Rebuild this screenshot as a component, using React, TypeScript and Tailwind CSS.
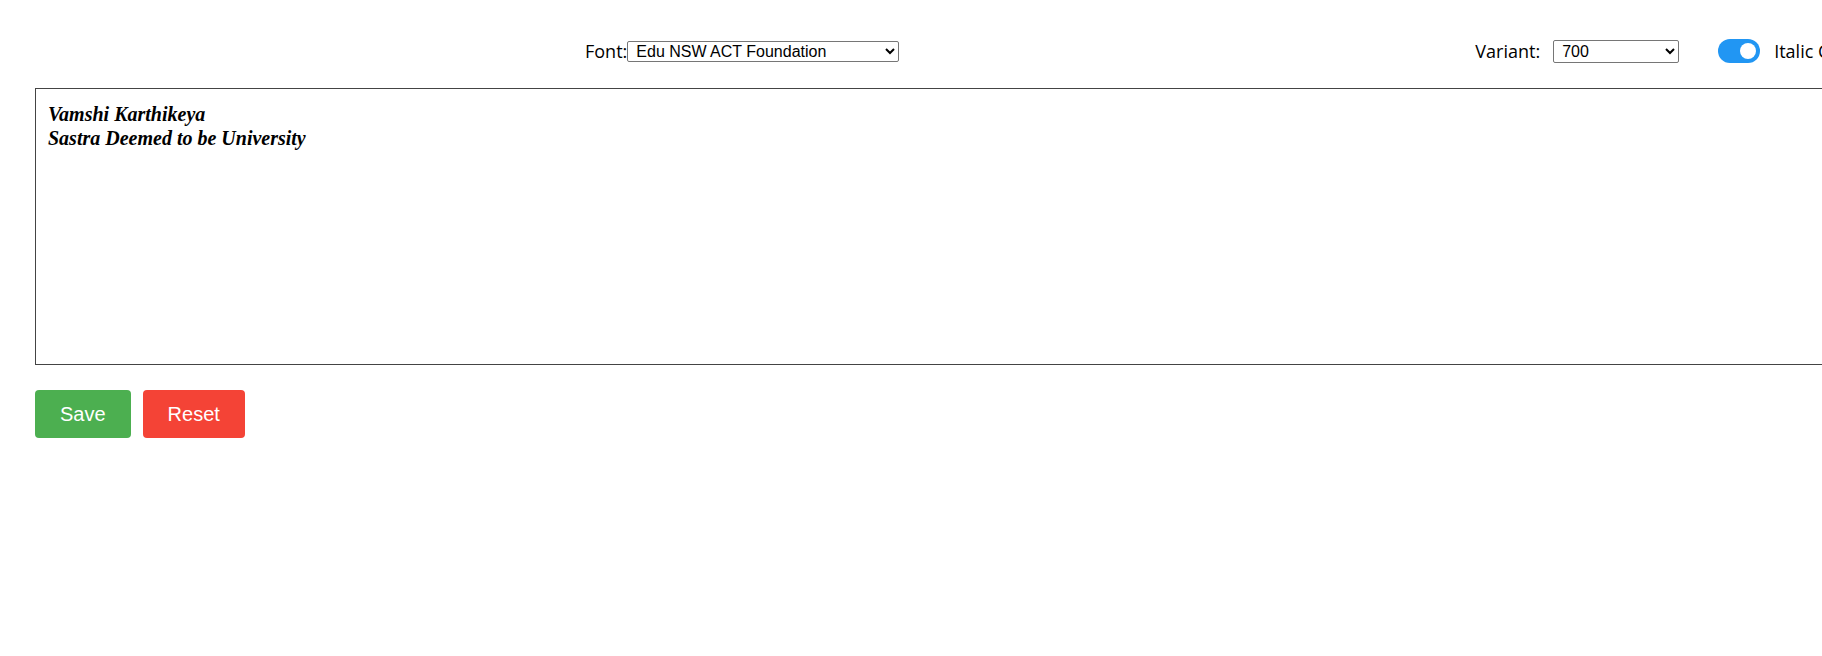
import { useState } from 'react'

export default function App() {
  const [font, setFont] = useState('Edu NSW ACT Foundation')
  const [variant, setVariant] = useState('700')
  const [italic, setItalic] = useState(true)
  const [text, setText] = useState('Vamshi Karthikeya\nSastra Deemed to be University')

  return (
    <div className="w-screen h-screen overflow-hidden bg-white">
      <div className="w-[1900px] px-[35px] pt-[38px]">
        {/* Controls row */}
        <div className="flex items-center h-[26px] font-['Open_Sans',sans-serif] text-[18px] text-black whitespace-nowrap">
          <label className="ml-[550px] flex shrink-0 items-center">
            <span>Font:</span>
            <select
              value={font}
              onChange={(e) => setFont(e.target.value)}
              className="w-[272px] h-[21px] border border-[#767676] rounded-[2px] bg-white pl-[4px] py-0 leading-none font-['Liberation_Sans',sans-serif] text-[16px]"
            >
              <option>Edu NSW ACT Foundation</option>
              <option>Roboto</option>
              <option>Open Sans</option>
              <option>Lato</option>
            </select>
          </label>

          <label className="ml-[576px] flex shrink-0 items-center">
            <span>Variant:</span>
            <select
              value={variant}
              onChange={(e) => setVariant(e.target.value)}
              className="w-[126px] h-[23px] ml-[13px] border border-[#767676] rounded-[2px] bg-white pl-[4px] py-0 leading-none font-['Liberation_Sans',sans-serif] text-[16px]"
            >
              <option>400</option>
              <option>500</option>
              <option>600</option>
              <option>700</option>
            </select>
          </label>

          <button
            onClick={() => setItalic(!italic)}
            className={`ml-[39px] shrink-0 w-[42px] h-[24px] rounded-full flex items-center px-[4px] ${italic ? 'bg-[#2196f3] justify-end' : 'bg-[#ccc] justify-start'}`}
          >
            <span className="w-[16px] h-[16px] rounded-full bg-white" />
          </button>
          <span className="ml-[14px] shrink-0">Italic Checked</span>
        </div>

        {/* Editor */}
        <textarea
          value={text}
          onChange={(e) => setText(e.target.value)}
          className={`mt-[24px] block w-[1820px] h-[277px] border border-[#444] px-[12px] pt-[13px] resize-none outline-none font-['Liberation_Serif',serif] text-[20px] leading-[24px] text-black ${italic ? 'italic' : ''}`}
          style={{ fontWeight: Number(variant) }}
        />

        {/* Actions */}
        <div className="mt-[25px] flex gap-[12px] font-['Liberation_Sans',sans-serif]">
          <button className="h-[48px] px-[25px] rounded-[4px] bg-[#4caf50] text-white text-[20px]">Save</button>
          <button className="h-[48px] px-[25px] rounded-[4px] bg-[#f44336] text-white text-[20px]">Reset</button>
        </div>
      </div>
    </div>
  )
}
